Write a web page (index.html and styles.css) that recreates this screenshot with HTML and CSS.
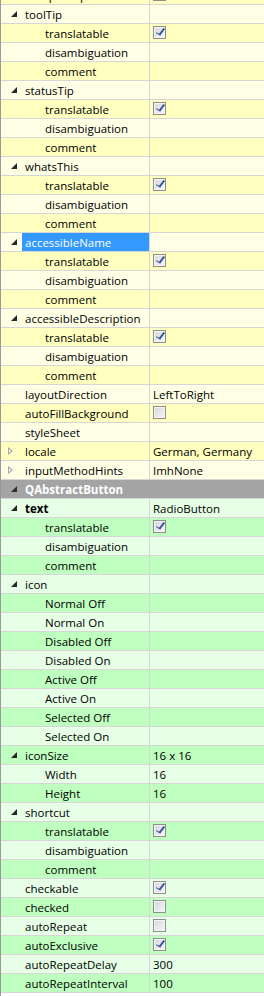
FILE: index.html
```html
<!DOCTYPE html>
<html lang="en">
<head>
    <meta charset="UTF-8">
    <title>Property Editor</title>
    <link rel="stylesheet" href="styles.css">
</head>
<body>
    <div class="editor">
        <div class="tree">
            <div class="row y2"><div class="name l0"><span class="branch"></span><span class="label">acceptDrops</span></div><div class="value"><span class="check"></span></div></div>

            <div class="row y1"><div class="name l0"><span class="branch open"></span><span class="label">toolTip</span></div><div class="value"></div></div>
            <div class="row y2"><div class="name l1"><span class="branch"></span><span class="label">translatable</span></div><div class="value"><span class="check on"></span></div></div>
            <div class="row y1"><div class="name l1"><span class="branch"></span><span class="label">disambiguation</span></div><div class="value"></div></div>
            <div class="row y2"><div class="name l1"><span class="branch"></span><span class="label">comment</span></div><div class="value"></div></div>

            <div class="row y1"><div class="name l0"><span class="branch open"></span><span class="label">statusTip</span></div><div class="value"></div></div>
            <div class="row y2"><div class="name l1"><span class="branch"></span><span class="label">translatable</span></div><div class="value"><span class="check on"></span></div></div>
            <div class="row y1"><div class="name l1"><span class="branch"></span><span class="label">disambiguation</span></div><div class="value"></div></div>
            <div class="row y2"><div class="name l1"><span class="branch"></span><span class="label">comment</span></div><div class="value"></div></div>

            <div class="row y1"><div class="name l0"><span class="branch open"></span><span class="label">whatsThis</span></div><div class="value"></div></div>
            <div class="row y2"><div class="name l1"><span class="branch"></span><span class="label">translatable</span></div><div class="value"><span class="check on"></span></div></div>
            <div class="row y1"><div class="name l1"><span class="branch"></span><span class="label">disambiguation</span></div><div class="value"></div></div>
            <div class="row y2"><div class="name l1"><span class="branch"></span><span class="label">comment</span></div><div class="value"></div></div>

            <div class="row y1 selected"><div class="name l0"><span class="branch open"></span><span class="label">accessibleName</span></div><div class="value"></div></div>
            <div class="row y2"><div class="name l1"><span class="branch"></span><span class="label">translatable</span></div><div class="value"><span class="check on"></span></div></div>
            <div class="row y1"><div class="name l1"><span class="branch"></span><span class="label">disambiguation</span></div><div class="value"></div></div>
            <div class="row y2"><div class="name l1"><span class="branch"></span><span class="label">comment</span></div><div class="value"></div></div>

            <div class="row y1"><div class="name l0"><span class="branch open"></span><span class="label">accessibleDescription</span></div><div class="value"></div></div>
            <div class="row y2"><div class="name l1"><span class="branch"></span><span class="label">translatable</span></div><div class="value"><span class="check on"></span></div></div>
            <div class="row y1"><div class="name l1"><span class="branch"></span><span class="label">disambiguation</span></div><div class="value"></div></div>
            <div class="row y2"><div class="name l1"><span class="branch"></span><span class="label">comment</span></div><div class="value"></div></div>

            <div class="row y1"><div class="name l0"><span class="branch"></span><span class="label">layoutDirection</span></div><div class="value">LeftToRight</div></div>
            <div class="row y2"><div class="name l0"><span class="branch"></span><span class="label">autoFillBackground</span></div><div class="value"><span class="check"></span></div></div>
            <div class="row y1"><div class="name l0"><span class="branch"></span><span class="label">styleSheet</span></div><div class="value"></div></div>
            <div class="row y2"><div class="name l0"><span class="branch closed"></span><span class="label">locale</span></div><div class="value">German, Germany</div></div>
            <div class="row y1"><div class="name l0"><span class="branch closed"></span><span class="label">inputMethodHints</span></div><div class="value">ImhNone</div></div>

            <div class="row header"><div class="name l0"><span class="branch open"></span><span class="label">QAbstractButton</span></div></div>

            <div class="row g1"><div class="name l0"><span class="branch open"></span><span class="label bold">text</span></div><div class="value">RadioButton</div></div>
            <div class="row g2"><div class="name l1"><span class="branch"></span><span class="label">translatable</span></div><div class="value"><span class="check on"></span></div></div>
            <div class="row g1"><div class="name l1"><span class="branch"></span><span class="label">disambiguation</span></div><div class="value"></div></div>
            <div class="row g2"><div class="name l1"><span class="branch"></span><span class="label">comment</span></div><div class="value"></div></div>

            <div class="row g1"><div class="name l0"><span class="branch open"></span><span class="label">icon</span></div><div class="value"></div></div>
            <div class="row g2"><div class="name l1"><span class="branch"></span><span class="label">Normal Off</span></div><div class="value"></div></div>
            <div class="row g1"><div class="name l1"><span class="branch"></span><span class="label">Normal On</span></div><div class="value"></div></div>
            <div class="row g2"><div class="name l1"><span class="branch"></span><span class="label">Disabled Off</span></div><div class="value"></div></div>
            <div class="row g1"><div class="name l1"><span class="branch"></span><span class="label">Disabled On</span></div><div class="value"></div></div>
            <div class="row g2"><div class="name l1"><span class="branch"></span><span class="label">Active Off</span></div><div class="value"></div></div>
            <div class="row g1"><div class="name l1"><span class="branch"></span><span class="label">Active On</span></div><div class="value"></div></div>
            <div class="row g2"><div class="name l1"><span class="branch"></span><span class="label">Selected Off</span></div><div class="value"></div></div>
            <div class="row g1"><div class="name l1"><span class="branch"></span><span class="label">Selected On</span></div><div class="value"></div></div>

            <div class="row g2"><div class="name l0"><span class="branch open"></span><span class="label">iconSize</span></div><div class="value">16 x 16</div></div>
            <div class="row g1"><div class="name l1"><span class="branch"></span><span class="label">Width</span></div><div class="value">16</div></div>
            <div class="row g2"><div class="name l1"><span class="branch"></span><span class="label">Height</span></div><div class="value">16</div></div>

            <div class="row g1"><div class="name l0"><span class="branch open"></span><span class="label">shortcut</span></div><div class="value"></div></div>
            <div class="row g2"><div class="name l1"><span class="branch"></span><span class="label">translatable</span></div><div class="value"><span class="check on"></span></div></div>
            <div class="row g1"><div class="name l1"><span class="branch"></span><span class="label">disambiguation</span></div><div class="value"></div></div>
            <div class="row g2"><div class="name l1"><span class="branch"></span><span class="label">comment</span></div><div class="value"></div></div>

            <div class="row g1"><div class="name l0"><span class="branch"></span><span class="label">checkable</span></div><div class="value"><span class="check on"></span></div></div>
            <div class="row g2"><div class="name l0"><span class="branch"></span><span class="label">checked</span></div><div class="value"><span class="check"></span></div></div>
            <div class="row g1"><div class="name l0"><span class="branch"></span><span class="label">autoRepeat</span></div><div class="value"><span class="check"></span></div></div>
            <div class="row g2"><div class="name l0"><span class="branch"></span><span class="label">autoExclusive</span></div><div class="value"><span class="check on"></span></div></div>
            <div class="row g1"><div class="name l0"><span class="branch"></span><span class="label">autoRepeatDelay</span></div><div class="value">300</div></div>
            <div class="row g2"><div class="name l0"><span class="branch"></span><span class="label">autoRepeatInterval</span></div><div class="value">100</div></div>
        </div>
    </div>
</body>
</html>
```

FILE: styles.css
```css
body {
    margin: 0;
    background-color: white;
    font-family: "Open Sans", "Noto Sans", sans-serif;
    font-size: 11.5px;
    color: #000;
    overflow: hidden;
}
.editor {
    height: 996px;
    border-left: 1px solid #9a9a9a;
    overflow: hidden;
}
.tree {
    margin-top: -14px;
}
.row {
    display: grid;
    grid-template-columns: 148px 1fr;
    height: 18px;
    line-height: 20px;
    overflow: hidden;
    border-bottom: 1px solid #d6d6d6;
    white-space: nowrap;
}
.y1 { background-color: #ffffe6; }
.y2 { background-color: #ffffbf; }
.g1 { background-color: #e6ffe6; }
.g2 { background-color: #bfffbf; }

.name {
    display: flex;
    overflow: hidden;
}
.branch {
    position: relative;
    flex: none;
    width: 21px;
}
.l1 .branch {
    width: 41px;
}
.label {
    flex: 1;
    padding-left: 3px;
}
.bold {
    font-weight: bold;
}
.value {
    border-left: 1px solid #d6d6d6;
    padding-left: 3px;
}
.value .check {
    margin-top: 2px;
}

/* expanded / collapsed arrows */
.branch.open::before {
    content: "";
    position: absolute;
    left: 10px;
    top: 6px;
    width: 0;
    height: 0;
    border-left: 6px solid transparent;
    border-bottom: 6px solid #262626;
}
.branch.closed::before {
    content: "";
    position: absolute;
    left: 7px;
    top: 5px;
    width: 0;
    height: 0;
    border-top: 4px solid transparent;
    border-bottom: 4px solid transparent;
    border-left: 5px solid #a6a6a6;
}
.branch.closed::after {
    content: "";
    position: absolute;
    left: 8px;
    top: 7px;
    width: 0;
    height: 0;
    border-top: 2px solid transparent;
    border-bottom: 2px solid transparent;
    border-left: 2.5px solid #fff;
}

.selected .label {
    background-color: #3399ff;
    color: white;
}

.header {
    background-color: #a4a4a4;
    color: white;
    font-weight: bold;
    grid-template-columns: 1fr;
}
.header .branch.open::before {
    border-bottom-color: #2e2e2e;
}

.check {
    display: block;
    box-sizing: border-box;
    width: 13px;
    height: 13px;
    border: 1px solid #8e8f8f;
    box-shadow: inset 0 0 0 1px #f4f4f4;
    background: linear-gradient(135deg, #d4d6da, #f7f7f7);
    position: relative;
}
.check.on::after {
    content: "";
    position: absolute;
    left: 4px;
    top: 0px;
    width: 3px;
    height: 7px;
    border-right: 2px solid #3d559c;
    border-bottom: 1.5px solid #3d559c;
    transform: rotate(30deg) skewX(-8deg);
}
```
